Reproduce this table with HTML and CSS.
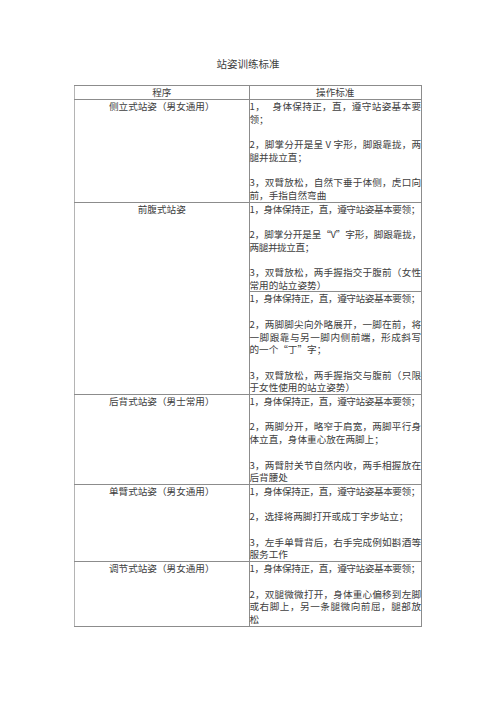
FILE: index.html
```html
<!DOCTYPE html>
<html lang="zh-CN">
<head>
<meta charset="utf-8">
<title>站姿训练标准</title>
<link rel="stylesheet" href="styles.css">
</head>
<body>
<div class="page">
  <h1 class="title">站姿训练标准</h1>
  <table class="std">
    <thead>
      <tr><th class="name">程序</th><th class="head-std">操作标准</th></tr>
    </thead>
    <tbody>
      <tr>
        <td class="name">侧立式站姿（男女通用）</td>
        <td class="steps">
          <p>1，&nbsp;&nbsp; 身体保持正，直，遵守站姿基本要领；</p>
          <p>2，脚掌分开是呈 V 字形，脚跟靠拢，两腿并拢立直；</p>
          <p>3，双臂放松，自然下垂于体侧，虎口向前，手指自然弯曲</p>
        </td>
      </tr>
      <tr>
        <td class="name" rowspan="2">前腹式站姿</td>
        <td class="steps">
          <p class="tight">1，身体保持正，直，遵守站姿基本要领；</p>
          <p class="tight">2，脚掌分开是呈“V”字形，脚跟靠拢，两腿并拢立直；</p>
          <p>3，双臂放松，两手握指交于腹前（女性常用的站立姿势）</p>
        </td>
      </tr>
      <tr>
        <td class="steps">
          <p class="tight">1，身体保持正，直，遵守站姿基本要领；</p>
          <p>2，两脚脚尖向外略展开，一脚在前，将一脚跟靠与另一脚内侧前端，形成斜写的一个“丁”字；</p>
          <p>3，双臂放松，两手握指交与腹前（只限于女性使用的站立姿势）</p>
        </td>
      </tr>
      <tr>
        <td class="name">后背式站姿（男士常用）</td>
        <td class="steps">
          <p class="tight">1，身体保持正，直，遵守站姿基本要领；</p>
          <p>2，两脚分开，略窄于肩宽，两脚平行身体立直，身体重心放在两脚上；</p>
          <p>3，两臂肘关节自然内收，两手相握放在后背腰处</p>
        </td>
      </tr>
      <tr>
        <td class="name">单臂式站姿（男女通用）</td>
        <td class="steps">
          <p class="tight">1，身体保持正，直，遵守站姿基本要领；</p>
          <p>2，选择将两脚打开或成丁字步站立；</p>
          <p>3，左手单臂背后，右手完成例如斟酒等服务工作</p>
        </td>
      </tr>
      <tr>
        <td class="name">调节式站姿（男女通用）</td>
        <td class="steps">
          <p class="tight">1，身体保持正，直，遵守站姿基本要领；</p>
          <p>2，双腿微微打开，身体重心偏移到左脚或右脚上，另一条腿微向前屈，腿部放松</p>
        </td>
      </tr>
    </tbody>
  </table>
</div>
</body>
</html>
```
FILE: styles.css
```css
html, body {
  margin: 0;
  background: #ffffff;
}

body {
  font-family: "Noto Sans CJK SC", sans-serif;
  color: #404040;
}

.page {
  padding-top: 56px;
}

.title {
  margin: 0 0 14px;
  font-size: 10.5px;
  line-height: 15px;
  font-weight: normal;
  text-align: center;
}

.std {
  width: 348px;
  margin: 0 auto;
  border-collapse: collapse;
  font-size: 9.6px;
  line-height: 12.7px;
}

.std th,
.std td {
  border: 1px solid #8c8c8c;
  padding: 0;
  vertical-align: top;
  font-weight: normal;
}

.std th {
  line-height: 13px;
  text-align: center;
}

.std tr > :first-child {
  border-left-color: #b4b4b4;
}

.name {
  width: 173px;
  text-align: center;
}

.steps {
  width: 171px;
  text-align: justify;
  border-left: 2px solid #7a7a7a;
  border-right-color: #7a7a7a;
}

.head-std {
  border-left: 2px solid #8c8c8c;
}

.steps p {
  margin: 0;
}

.steps p + p {
  margin-top: 12.7px;
}

.steps .tight {
  letter-spacing: -0.4px;
}
```
